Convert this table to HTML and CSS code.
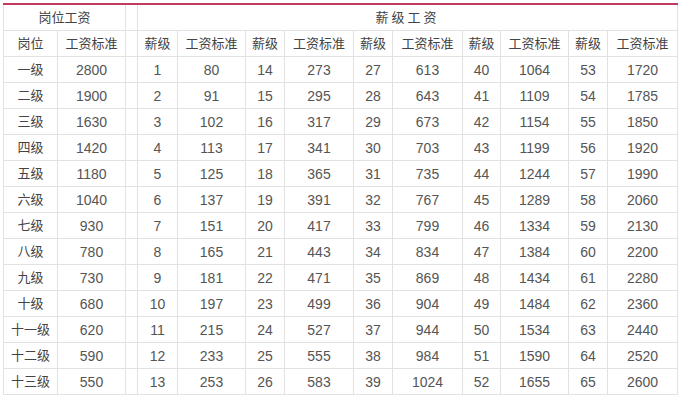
FILE: index.html
```html
<!DOCTYPE html>
<html lang="zh">
<head>
<meta charset="utf-8">
<link rel="stylesheet" href="styles.css">
</head>
<body>
<div class="wrap">
<table class="pay">
<colgroup>
<col style="width:54px"><col style="width:68px"><col style="width:12px">
<col style="width:40px"><col style="width:68px">
<col style="width:39px"><col style="width:69px">
<col style="width:39px"><col style="width:70px">
<col style="width:38px"><col style="width:68px">
<col style="width:39px"><col style="width:70px">
</colgroup>
<tr><td colspan="2">岗位工资</td><td></td><td colspan="10" class="wide">薪级工资</td></tr>
<tr><td>岗位</td><td>工资标准</td><td></td><td>薪级</td><td>工资标准</td><td>薪级</td><td>工资标准</td><td>薪级</td><td>工资标准</td><td>薪级</td><td>工资标准</td><td>薪级</td><td>工资标准</td></tr>
<tr><td>一级</td><td>2800</td><td></td><td>1</td><td>80</td><td>14</td><td>273</td><td>27</td><td>613</td><td>40</td><td>1064</td><td>53</td><td>1720</td></tr>
<tr><td>二级</td><td>1900</td><td></td><td>2</td><td>91</td><td>15</td><td>295</td><td>28</td><td>643</td><td>41</td><td>1109</td><td>54</td><td>1785</td></tr>
<tr><td>三级</td><td>1630</td><td></td><td>3</td><td>102</td><td>16</td><td>317</td><td>29</td><td>673</td><td>42</td><td>1154</td><td>55</td><td>1850</td></tr>
<tr><td>四级</td><td>1420</td><td></td><td>4</td><td>113</td><td>17</td><td>341</td><td>30</td><td>703</td><td>43</td><td>1199</td><td>56</td><td>1920</td></tr>
<tr><td>五级</td><td>1180</td><td></td><td>5</td><td>125</td><td>18</td><td>365</td><td>31</td><td>735</td><td>44</td><td>1244</td><td>57</td><td>1990</td></tr>
<tr><td>六级</td><td>1040</td><td></td><td>6</td><td>137</td><td>19</td><td>391</td><td>32</td><td>767</td><td>45</td><td>1289</td><td>58</td><td>2060</td></tr>
<tr><td>七级</td><td>930</td><td></td><td>7</td><td>151</td><td>20</td><td>417</td><td>33</td><td>799</td><td>46</td><td>1334</td><td>59</td><td>2130</td></tr>
<tr><td>八级</td><td>780</td><td></td><td>8</td><td>165</td><td>21</td><td>443</td><td>34</td><td>834</td><td>47</td><td>1384</td><td>60</td><td>2200</td></tr>
<tr><td>九级</td><td>730</td><td></td><td>9</td><td>181</td><td>22</td><td>471</td><td>35</td><td>869</td><td>48</td><td>1434</td><td>61</td><td>2280</td></tr>
<tr><td>十级</td><td>680</td><td></td><td>10</td><td>197</td><td>23</td><td>499</td><td>36</td><td>904</td><td>49</td><td>1484</td><td>62</td><td>2360</td></tr>
<tr><td>十一级</td><td>620</td><td></td><td>11</td><td>215</td><td>24</td><td>527</td><td>37</td><td>944</td><td>50</td><td>1534</td><td>63</td><td>2440</td></tr>
<tr><td>十二级</td><td>590</td><td></td><td>12</td><td>233</td><td>25</td><td>555</td><td>38</td><td>984</td><td>51</td><td>1590</td><td>64</td><td>2520</td></tr>
<tr><td>十三级</td><td>550</td><td></td><td>13</td><td>253</td><td>26</td><td>583</td><td>39</td><td>1024</td><td>52</td><td>1655</td><td>65</td><td>2600</td></tr>
</table>
</div>
</body>
</html>
```
FILE: styles.css
```css
html, body {
  margin: 0;
  padding: 0;
  background: #ffffff;
}
.wrap {
  padding: 3px 0 0 3px;
}
.pay {
  border-collapse: collapse;
  table-layout: fixed;
  width: 674px;
  border-top: 2px solid #c23a5e;
  font-family: "Liberation Sans", "Noto Sans CJK SC", sans-serif;
  font-size: 14px;
  color: #555555;
}
.pay td {
  border: 1px solid #e2e2e2;
  height: 25px;
  padding: 0;
  text-align: center;
  vertical-align: middle;
  line-height: 16px;
}
.pay tr:first-child td {
  border-top: none;
}
.pay tr:nth-child(-n+2) td,
.pay td:first-child {
  font-size: 13px;
  color: #444444;
}
.pay .wide {
  letter-spacing: 3px;
}
```
